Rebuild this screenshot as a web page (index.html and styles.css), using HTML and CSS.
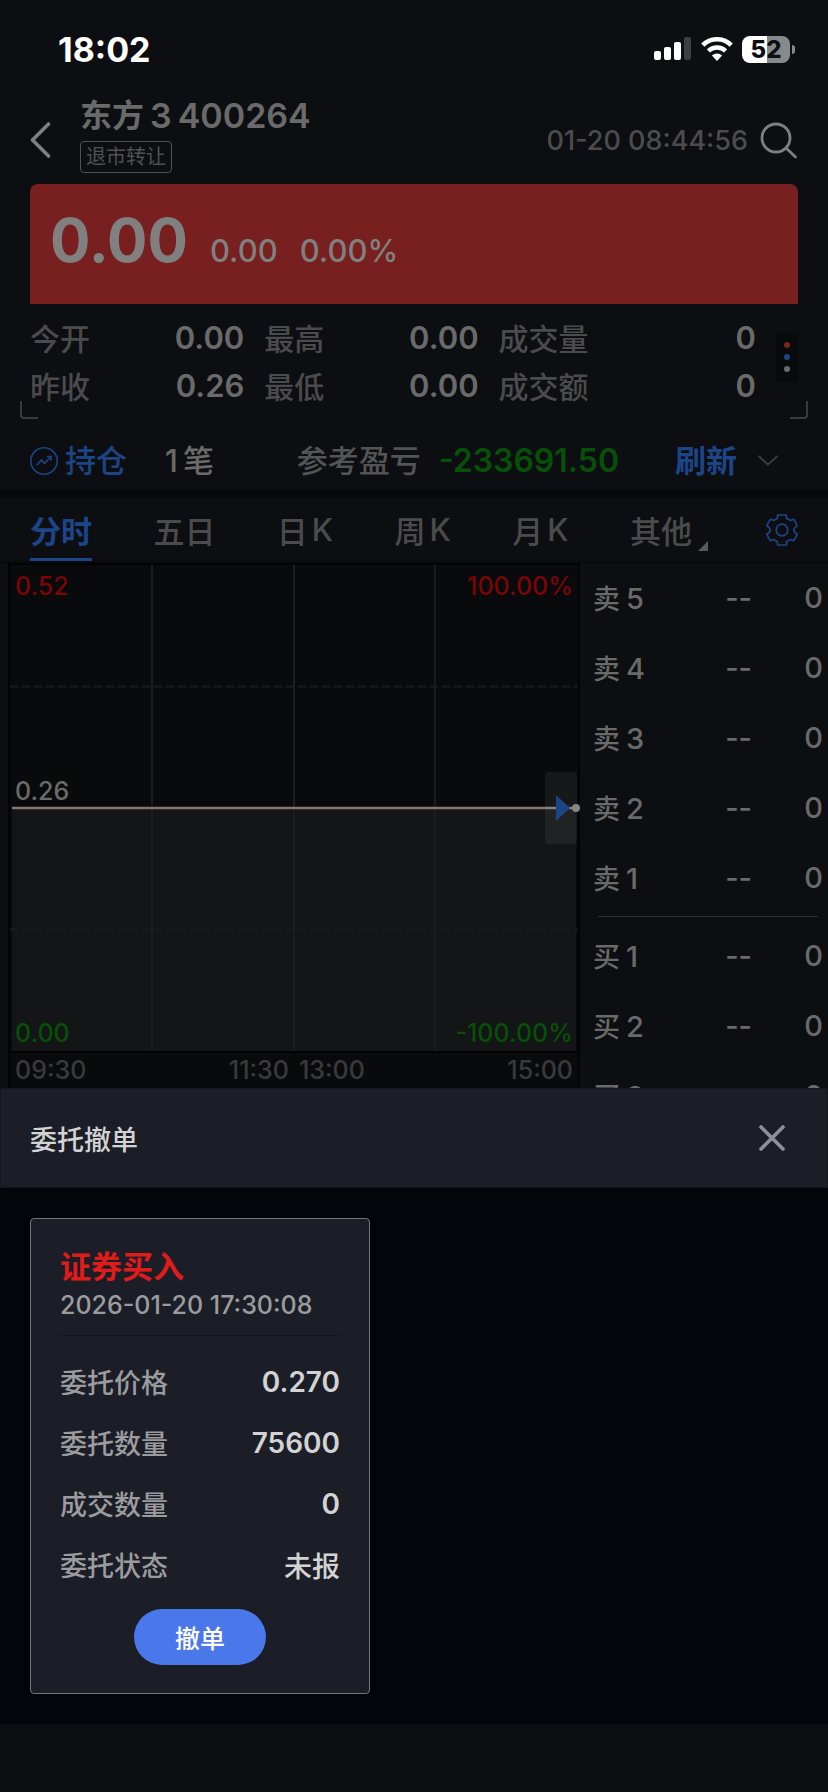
FILE: index.html
```html
<!DOCTYPE html>
<html lang="zh-CN">
<head>
<meta charset="utf-8">
<meta name="viewport" content="width=device-width, initial-scale=1">
<title>委托撤单</title>
<link rel="stylesheet" href="styles.css">
</head>
<body>
<div class="app">
  <div class="quote">
    <div class="status-bar">
      <span class="clock">18:02</span>
      <div class="status-icons">
        <svg class="signal" width="38" height="24" viewBox="0 0 38 24" aria-hidden="true">
          <rect x="0" y="14" width="7" height="9" rx="2" fill="#fff"/>
          <rect x="10" y="10" width="7" height="13" rx="2" fill="#fff"/>
          <rect x="20" y="5" width="7" height="18" rx="2" fill="#fff"/>
          <rect x="30" y="0" width="7" height="23" rx="2" fill="#3d3e42"/>
        </svg>
        <svg class="wifi" width="32" height="24" viewBox="0 0 32 24" aria-hidden="true">
          <path d="M1.8 8.2 A20 20 0 0 1 30.2 8.2" fill="none" stroke="#fff" stroke-width="4.6"/>
          <path d="M7.4 14 A12.2 12.2 0 0 1 24.6 14" fill="none" stroke="#fff" stroke-width="4.4"/>
          <path d="M16 24 L10.9 18.6 A7.4 7.4 0 0 1 21.1 18.6 Z" fill="#fff"/>
        </svg>
        <div class="battery"><span class="battery-level">52</span><i class="battery-tip"></i></div>
      </div>
    </div>

    <header class="top">
      <button class="icon-btn back" aria-label="返回">
        <svg width="22" height="38" viewBox="0 0 22 38"><path d="M18.500 3 L2.500 19 L18.500 35" fill="none" stroke="#7f7f80" stroke-width="3.600" stroke-linecap="round" stroke-linejoin="round"/></svg>
      </button>
      <div class="stock">
        <h1 class="stock-name"><span>东方</span><span class="code">3</span><span class="code">400264</span></h1>
        <span class="tag">退市转让</span>
      </div>
      <time class="server-time">01-20 08:44:56</time>
      <button class="icon-btn" aria-label="搜索">
        <svg width="38" height="38" viewBox="0 0 38 38"><g fill="none" stroke="#7f7f80" stroke-width="2.800" stroke-linecap="round"><circle cx="16" cy="17" r="14"/><path d="M26 27 L35.500 36"/></g></svg>
      </button>
    </header>

    <section class="price-banner">
      <span class="price">0.00</span>
      <span class="change">0.00</span>
      <span class="change">0.00%</span>
    </section>

    <section class="stats">
      <dl class="stat-grid">
        <div class="stat"><dt>今开</dt><dd>0.00</dd></div>
        <div class="stat"><dt>最高</dt><dd>0.00</dd></div>
        <div class="stat"><dt>成交量</dt><dd>0</dd></div>
        <div class="stat"><dt>昨收</dt><dd>0.26</dd></div>
        <div class="stat"><dt>最低</dt><dd>0.00</dd></div>
        <div class="stat"><dt>成交额</dt><dd>0</dd></div>
      </dl>
      <button class="more" aria-label="更多"><i class="dot dot-red"></i><i class="dot dot-blue"></i><i class="dot dot-grey"></i></button>
      <i class="corner corner-left"></i><i class="corner corner-right"></i>
    </section>

    <section class="position">
      <button class="hold">
        <svg width="28" height="28" viewBox="0 0 28 28" aria-hidden="true"><g fill="none" stroke="#1b4587" stroke-width="1.600"><circle cx="14" cy="14" r="13.200"/><path d="M6.500 18.500 L11.500 13 L14.500 16.500 L20.500 10"/><path d="M17 9.500 H21 V13.500"/></g></svg>
        <span>持仓</span>
      </button>
      <span class="count"><span>1</span><span>笔</span></span>
      <span class="pl-label">参考盈亏</span>
      <span class="pl-value">-233691.50</span>
      <button class="refresh">刷新</button>
      <button class="icon-btn" aria-label="展开">
        <svg width="20" height="12" viewBox="0 0 20 12"><path d="M1 1.500 L10 9.500 L19 1.500" fill="none" stroke="#39393c" stroke-width="2.200" stroke-linecap="round" stroke-linejoin="round"/></svg>
      </button>
    </section>

    <nav class="tabs">
      <div class="tab-list">
        <button class="tab tab-active">分时</button>
        <button class="tab">五日</button>
        <button class="tab"><span>日</span><span>K</span></button>
        <button class="tab"><span>周</span><span>K</span></button>
        <button class="tab"><span>月</span><span>K</span></button>
        <button class="tab tab-more">其他<i class="tab-arrow"></i></button>
      </div>
      <button class="icon-btn settings" aria-label="设置">
        <svg width="32" height="32" viewBox="0 0 32 32"><g fill="none" stroke="#1b4587" stroke-width="1.700" stroke-linejoin="round"><path d="M11.500 1 H20.500 V4.200 L24.500 6.600 L27.500 5.200 Q29.800 7.800 31.200 12 Q28 13.200 28 16 Q28 18.800 31.200 20 Q29.800 24.200 27.500 26.800 L24.500 25.400 L20.500 27.800 V31 H11.500 V27.800 L7.500 25.400 L4.500 26.800 Q2.200 24.200 0.900 20 Q4 18.800 4 16 Q4 13.200 0.900 12 Q2.200 7.800 4.500 5.200 L7.500 6.600 L11.500 4.200 Z"/><circle cx="16" cy="16" r="5.800"/></g></svg>
      </button>
    </nav>

    <div class="market">
      <section class="chart">
        <div class="plot">
          <svg class="plot-lines" width="100%" height="100%" aria-hidden="true">
            <rect x="2" y="50%" width="99.300%" height="50%" fill="#131516"/>
            <g stroke="#1a1b21" stroke-width="2" stroke-dasharray="8 4"><line x1="0" x2="100%" y1="25%" y2="25%"/><line x1="0" x2="100%" y1="75%" y2="75%"/></g>
            <g stroke="#1b1c25" stroke-width="2"><line x1="25%" x2="25%" y1="0" y2="100%"/><line x1="50%" x2="50%" y1="0" y2="100%"/><line x1="74.800%" x2="74.800%" y1="0" y2="100%"/></g>
            <line x1="2" x2="100%" y1="50%" y2="50%" stroke="#4a403b" stroke-width="3"/>
            <line x1="2" x2="100%" y1="50%" y2="50%" stroke="#85786f" stroke-width="2"/>
          </svg>
          <div class="plot-row"><span class="up">0.52</span><span class="up">100.00%</span></div>
          <div class="plot-row plot-mid"><span>0.26</span></div>
          <div class="plot-row"><span class="down">0.00</span><span class="down">-100.00%</span></div>
          <button class="expand" aria-label="收起盘口"><svg width="14" height="26" viewBox="0 0 14 26"><path d="M0 0 L14 13 L0 26 Z" fill="#1b4587"/></svg></button>
          <i class="last-dot"></i>
        </div>
        <div class="axis"><span>09:30</span><span class="axis-mid"><span>11:30</span><span>13:00</span></span><span>15:00</span></div>
      </section>
      <section class="book">
        <div class="level"><span class="side"><span>卖</span><span>5</span></span><span class="quote-price">--</span><span>0</span></div>
        <div class="level"><span class="side"><span>卖</span><span>4</span></span><span class="quote-price">--</span><span>0</span></div>
        <div class="level"><span class="side"><span>卖</span><span>3</span></span><span class="quote-price">--</span><span>0</span></div>
        <div class="level"><span class="side"><span>卖</span><span>2</span></span><span class="quote-price">--</span><span>0</span></div>
        <div class="level"><span class="side"><span>卖</span><span>1</span></span><span class="quote-price">--</span><span>0</span></div>
        <hr class="book-rule">
        <div class="level"><span class="side"><span>买</span><span>1</span></span><span class="quote-price">--</span><span>0</span></div>
        <div class="level"><span class="side"><span>买</span><span>2</span></span><span class="quote-price">--</span><span>0</span></div>
        <div class="level"><span class="side"><span>买</span><span>3</span></span><span class="quote-price">--</span><span>0</span></div>
      </section>
    </div>
  </div>

  <section class="sheet" role="dialog" aria-labelledby="sheet-title">
    <header class="sheet-head">
      <h2 class="sheet-title" id="sheet-title">委托撤单</h2>
      <button class="icon-btn" aria-label="关闭">
        <svg width="28" height="28" viewBox="0 0 28 28"><path d="M3 3 L25 25 M25 3 L3 25" fill="none" stroke="#8d8f9f" stroke-width="3.600" stroke-linecap="round"/></svg>
      </button>
    </header>
    <div class="sheet-body">
      <article class="order">
        <h3 class="order-type">证券买入</h3>
        <time class="order-time">2026-01-20 17:30:08</time>
        <dl class="order-fields">
          <div class="field"><dt>委托价格</dt><dd>0.270</dd></div>
          <div class="field"><dt>委托数量</dt><dd>75600</dd></div>
          <div class="field"><dt>成交数量</dt><dd>0</dd></div>
          <div class="field"><dt>委托状态</dt><dd class="state">未报</dd></div>
        </dl>
        <button class="cancel">撤单</button>
      </article>
    </div>
  </section>
</div>
</body>
</html>
```
FILE: styles.css
```css
* { box-sizing: border-box; }

body {
  margin: 0;
  background: #0d0e12;
  color: #6a6a6b;
  font-family: Inter, "Noto Sans CJK SC", sans-serif;
  font-weight: 500;
}

h1, h2, h3, dl, dd { margin: 0; }

button {
  margin: 0;
  padding: 0;
  border: 0;
  background: none;
  color: inherit;
  font: inherit;
}

svg { display: block; }

.icon-btn { display: flex; align-items: center; justify-content: center; flex: none; }

.app { display: flex; flex-direction: column; height: 100vh; }

.quote {
  flex: 1;
  min-height: 0;
  overflow: hidden;
  display: flex;
  flex-direction: column;
}
.quote > * { flex: none; }

/* Status bar */
.status-bar {
  display: flex;
  align-items: center;
  justify-content: space-between;
  height: 98px;
  padding: 0 33px 0 58px;
  color: #fff;
}
.clock { font-size: 34px; font-weight: 700; }
.status-icons { display: flex; align-items: center; gap: 9px; }
.battery {
  position: relative;
  width: 48px;
  height: 27px;
  margin-right: 5px;
  border-radius: 8px;
  background: linear-gradient(90deg, #fff 52%, #88898b 52%);
  color: #0d0e12;
  text-align: center;
}
.battery-level { display: block; font-size: 24px; font-weight: 800; line-height: 27px; }
.battery-tip {
  position: absolute;
  left: 50px;
  top: 9px;
  width: 3px;
  height: 9px;
  border-radius: 0 4px 4px 0;
  background: #88898b;
}

/* Title bar */
.top {
  display: flex;
  align-items: center;
  height: 84px;
  margin-bottom: 2px;
  padding: 0 30px;
  gap: 12px;
}
.back { width: 22px; }
.stock {
  flex: 1;
  align-self: flex-start;
  padding-left: 16px;
  display: flex;
  flex-direction: column;
  align-items: flex-start;
}
.stock-name {
  display: flex;
  align-items: center;
  gap: 6px;
  font-size: 32px;
  line-height: 36px;
  font-weight: 600;
  white-space: nowrap;
}
.code { font-size: 34px; }
.tag {
  margin-top: 7px;
  padding: 0 5px;
  border: 1px solid #515153;
  border-radius: 4px;
  color: #515153;
  font-size: 20px;
  font-weight: 400;
  line-height: 30px;
}
.server-time { color: #4c4c4e; font-size: 27px; }

/* Price banner */
.price-banner {
  display: flex;
  align-items: baseline;
  gap: 22px;
  height: 120px;
  margin: 0 30px;
  padding: 18px 20px 0;
  border-radius: 8px 8px 0 0;
  background: #781f1f;
  color: #808080;
}
.price { font-size: 60px; line-height: 76px; font-weight: 700; }
.change { font-size: 31px; }

/* Statistics */
.stats {
  position: relative;
  display: flex;
  align-items: center;
  gap: 20px;
  padding: 9px 30px 10px;
}
.stat-grid { flex: 1; display: grid; grid-template-columns: 214fr 214fr 257fr; column-gap: 20px; }
.stat { display: flex; align-items: center; justify-content: space-between; height: 48px; }
.stat dt { color: #4b4b4d; font-size: 30px; }
.stat dd { font-size: 31px; font-weight: 600; }
.more {
  display: flex;
  flex-direction: column;
  align-items: center;
  justify-content: center;
  gap: 6px;
  width: 22px;
  height: 50px;
  margin-bottom: 8px;
  border-radius: 4px;
  background: #090a0c;
}
.dot { width: 6px; height: 6px; border-radius: 50%; }
.dot-red { background: #7c241c; }
.dot-blue { background: #1b4587; }
.dot-grey { background: #6a6a6b; }
.corner {
  position: absolute;
  bottom: 0;
  width: 18px;
  height: 18px;
  border: 0 solid #3a3a3d;
  border-bottom-width: 2px;
}
.corner-left { left: 20px; border-left-width: 2px; border-bottom-left-radius: 4px; }
.corner-right { right: 20px; border-right-width: 2px; border-bottom-right-radius: 4px; }

/* Position summary */
.position {
  display: flex;
  align-items: center;
  height: 80px;
  padding: 13px 50px 0 30px;
  border-bottom: 10px solid #08090b;
  font-size: 31px;
  line-height: 48px;
  white-space: nowrap;
}
.hold { display: flex; align-items: center; gap: 7px; color: #1b4587; }
.count { display: flex; gap: 5px; margin-left: 38px; }
.pl-label { margin-left: auto; color: #545456; }
.pl-value { margin: 0 56px 0 18px; color: #075007; font-size: 32px; font-weight: 600; }
.refresh { margin-right: 21px; color: #1b4587; font-weight: 700; }

/* Period tabs */
.tabs {
  display: flex;
  justify-content: space-between;
  align-items: center;
  height: 64px;
  padding: 0 30px;
  border-bottom: 2px solid #090a0c;
}
.tab-list { display: flex; justify-content: space-between; width: 662px; height: 100%; }
.tab {
  position: relative;
  display: flex;
  align-items: center;
  gap: 4px;
  padding-bottom: 2px;
  color: #4b4b4d;
  font-size: 31px;
}
.tab-active { color: #1b4587; font-weight: 700; box-shadow: inset 0 -3px #1b4587; }
.tab-arrow {
  position: absolute;
  right: -16px;
  bottom: 10px;
  border-left: 10px solid transparent;
  border-bottom: 10px solid #59595b;
}

/* Chart and order book */
.market { display: grid; grid-template-columns: minmax(0, 572fr) minmax(0, 248fr); padding-left: 8px; }
.chart {
  border: 2px solid #030304;
  border-bottom: 0;
  background: #090a0c;
  font-size: 25px;
}
.plot {
  position: relative;
  display: flex;
  flex-direction: column;
  justify-content: space-between;
  height: 488px;
  border-bottom: 2px solid #030304;
}
.plot-lines { position: absolute; inset: 0; }
.plot-row {
  position: relative;
  display: flex;
  justify-content: space-between;
  padding: 5px 5px 2px;
  line-height: 32px;
}
.plot-mid { margin-bottom: 38px; }
.up { color: #7b0404; }
.down { color: #075007; }
.expand {
  position: absolute;
  right: 1px;
  top: calc(50% - 36px);
  width: 32px;
  height: 72px;
  padding-left: 11px;
  border-radius: 4px;
  background: rgba(255, 255, 255, 0.06);
}
.last-dot {
  position: absolute;
  right: -2px;
  top: calc(50% - 4px);
  width: 8px;
  height: 8px;
  border-radius: 50%;
  background: #868686;
}
.axis { display: flex; justify-content: space-between; padding: 0 5px; color: #3a3a3c; line-height: 34px; }
.axis-mid { display: flex; gap: 10px; }

.book { padding: 0 5px 0 13px; }
.level {
  display: grid;
  grid-template-columns: auto 1fr 71px;
  align-items: center;
  height: 70px;
  padding-bottom: 2px;
  font-size: 29px;
  text-align: right;
}
.side { display: flex; align-items: baseline; gap: 6px; }
.side :first-child { font-size: 27px; }
.book-rule { height: 1px; margin: 3px 5px 4px 5px; border: 0; background: #303033; }

/* Cancel sheet */
.sheet { flex: none; padding-bottom: 68px; background: #0d0e12; }
.sheet-head {
  display: flex;
  align-items: center;
  justify-content: space-between;
  height: 100px;
  padding: 0 41px 0 29px;
  border: 1px solid #14161b;
  background: #1b1e27;
}
.sheet-title { color: #d3d3d4; font-size: 27px; font-weight: 500; }
.sheet-body { padding: 30px; background: #04050a; }
.order {
  display: flex;
  flex-direction: column;
  width: 340px;
  padding: 30px 29px 28px;
  border: 1px solid #75767a;
  border-radius: 4px;
  background: #1b1e27;
}
.order-type { color: #e01b1b; font-size: 31px; line-height: 36px; font-weight: 700; }
.order-time {
  padding-bottom: 10px;
  border-bottom: 1px solid #13151b;
  color: #9c9c9f;
  font-size: 25px;
  line-height: 40px;
}
.order-fields { padding: 15px 0 14px; }
.field { display: flex; align-items: center; justify-content: space-between; height: 61px; }
.field dt { color: #9c9c9f; font-size: 27px; }
.field dd { color: #d3d3d4; font-size: 28px; font-weight: 600; }
.field .state { font-weight: 500; }
.cancel {
  align-self: center;
  width: 132px;
  height: 56px;
  border-radius: 28px;
  background: #4a78ea;
  color: #fff;
  font-size: 25px;
}
```
